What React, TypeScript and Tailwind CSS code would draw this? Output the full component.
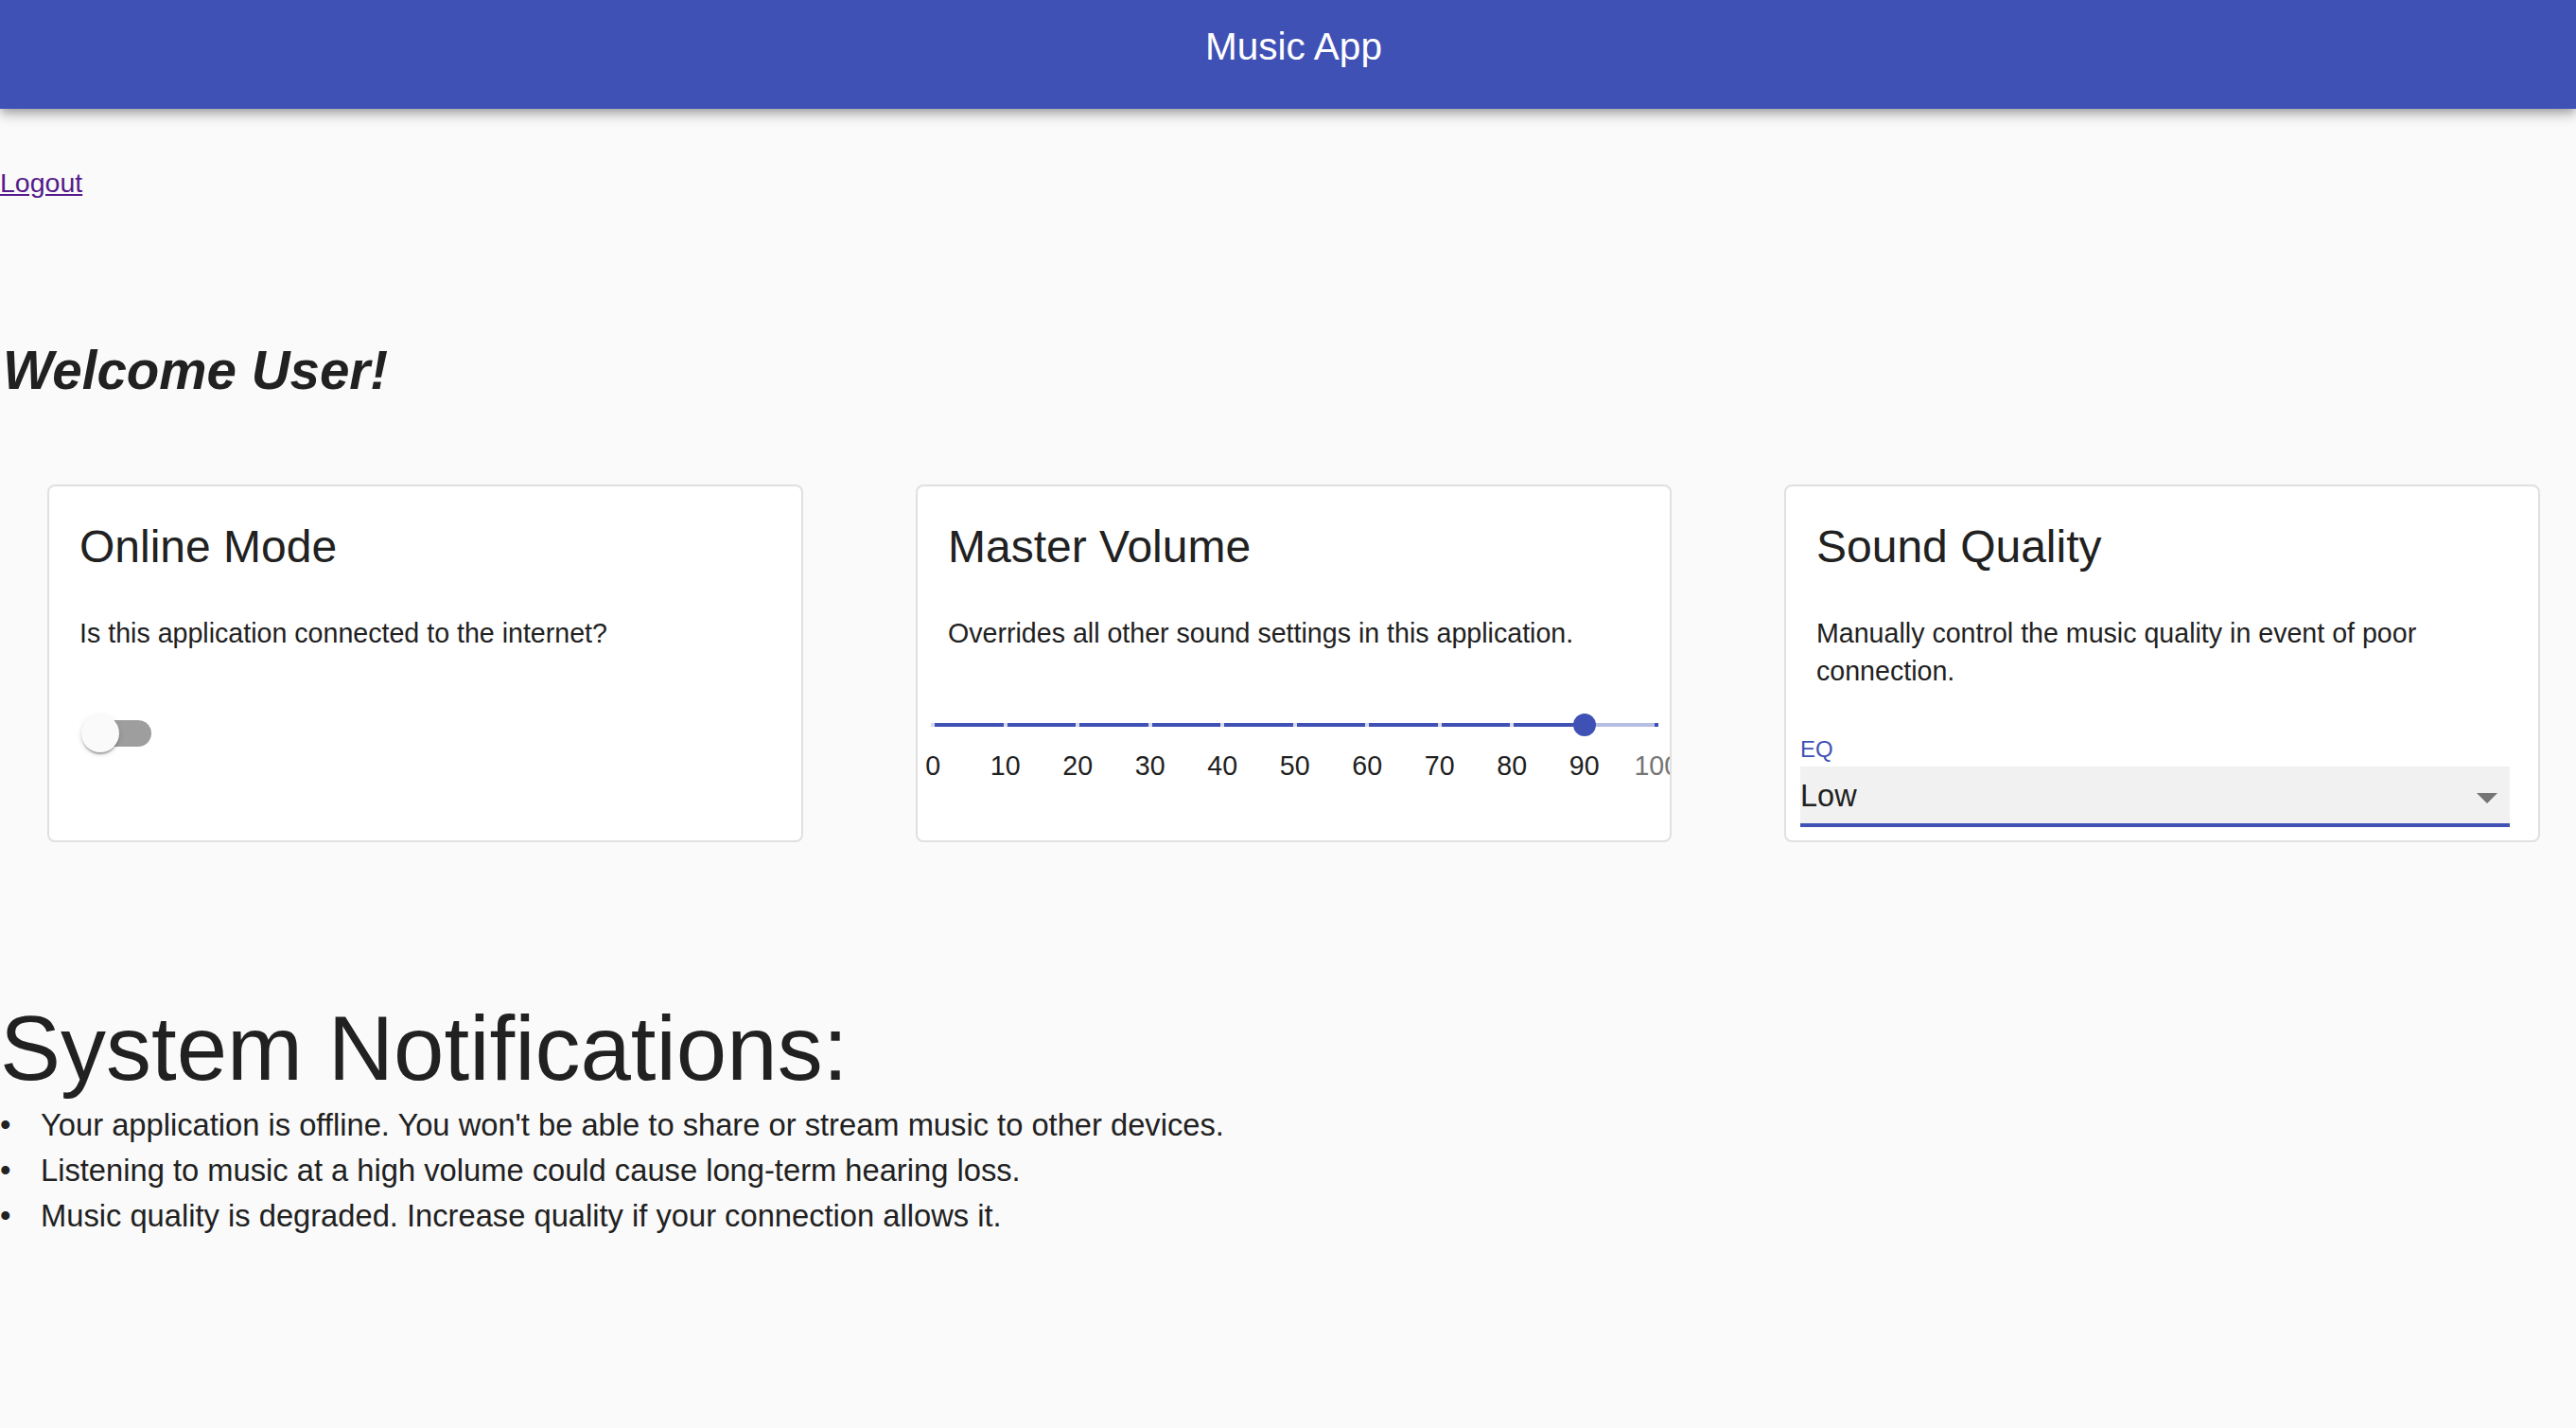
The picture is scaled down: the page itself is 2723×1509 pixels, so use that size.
import React from 'react';

const marks = [0, 10, 20, 30, 40, 50, 60, 70, 80, 90, 100];
const volume = 90;

const notifications = [
  "Your application is offline. You won't be able to share or stream music to other devices.",
  'Listening to music at a high volume could cause long-term hearing loss.',
  'Music quality is degraded. Increase quality if your connection allows it.',
];

function Card({ title, description, children }: { title: string; description: string; children: React.ReactNode }) {
  return (
    <div className="w-[799px] h-[378px] shrink-0 bg-white border-2 border-[#e0e0e0] rounded-[8px] px-[32px] pt-[34px] overflow-hidden flex flex-col">
      <h2 className="text-[48px] leading-[60px] text-[#212121]">{title}</h2>
      <p className="mt-[41px] text-[28.6px] leading-[40px] text-[#212121]">{description}</p>
      {children}
    </div>
  );
}

function VolumeSlider() {
  return (
    <div className="-ml-[16px] w-[765px] shrink-0">
      {/* rail, track, marks, thumb */}
      <div className="relative mt-[65px] h-[24px] flex items-center">
        <div className="w-full h-[4px] bg-[#b6bde3]">
          <div className="h-full bg-[#3f51b5]" style={{ width: `${volume}%` }} />
        </div>
        <div className="absolute inset-x-[-2px] top-[10px] flex justify-between">
          {marks.map((m) => (
            <div key={m} className={`w-[4px] h-[4px] ${m <= volume ? 'bg-[#d9dcf0]' : 'bg-[#3f51b5]'}`} />
          ))}
        </div>
        <div
          className="absolute top-0 w-[24px] h-[24px] rounded-full bg-[#3f51b5] -translate-x-1/2"
          style={{ left: `${volume}%` }}
        />
      </div>
      {/* labels */}
      <div className="mt-[11px] -ml-[38px] flex">
        {marks.map((m) => (
          <span
            key={m}
            className={`w-[76.5px] shrink-0 text-center text-[28.6px] leading-[40px] ${m <= volume ? 'text-[#212121]' : 'text-[#757575]'}`}
          >
            {m}
          </span>
        ))}
      </div>
    </div>
  );
}

export default function App() {
  return (
    <div className="min-h-screen bg-[#fafafa] text-[#212121] font-['Liberation_Sans',Arial,sans-serif]">
      {/* App bar */}
      <header className="h-[115px] bg-[#3f51b5] flex items-center justify-center pb-[17px] pl-[12px] shadow-[0_4px_8px_-2px_rgba(0,0,0,0.2),0_8px_10px_0_rgba(0,0,0,0.14),0_2px_20px_0_rgba(0,0,0,0.12)]">
        <h1 className="text-white text-[40.5px] leading-none">Music App</h1>
      </header>

      <div className="mt-[62px] text-[28.5px] leading-[32px]">
        <a href="#" className="text-[#551a8b] underline">Logout</a>
      </div>

      <h3 className="mt-[151px] ml-[3px] text-[56.5px] leading-[64px] font-bold italic">Welcome User!</h3>

      {/* Settings cards */}
      <div className="mt-[88px] pl-[50px] flex gap-[119px]">
        <Card title="Online Mode" description="Is this application connected to the internet?">
          <div className="relative mt-[66px] h-[40px] w-[80px] flex items-center">
            <div className="ml-[8px] w-[68px] h-[28px] rounded-full bg-[#9e9e9e]" />
            <div className="absolute left-[2px] top-0 w-[40px] h-[40px] rounded-full bg-[#fafafa] shadow-[0_4px_2px_-2px_rgba(0,0,0,0.2),0_2px_2px_0_rgba(0,0,0,0.14),0_2px_6px_0_rgba(0,0,0,0.12)]" />
          </div>
        </Card>

        <Card title="Master Volume" description="Overrides all other sound settings in this application.">
          <VolumeSlider />
        </Card>

        <Card title="Sound Quality" description="Manually control the music quality in event of poor connection.">
          <div className="-ml-[17px] w-[750px] flex flex-col">
            <div className="mt-[51px] text-[24px] leading-[24px] text-[#3f51b5]">EQ</div>
            <div className="mt-[6px] h-[64px] bg-[#f1f1f1] border-b-4 border-[#3f51b5] pt-[11px] pr-[13px] flex items-start justify-between">
              <span className="text-[32.5px] leading-[40px] text-[#212121]">Low</span>
              <svg className="mt-[17px] w-[22px] h-[11px]" viewBox="0 0 10 5">
                <polygon points="0,0 10,0 5,5" fill="#757575" />
              </svg>
            </div>
          </div>
        </Card>
      </div>

      <h2 className="mt-[163px] text-[96px] leading-[110px]">System Notifications:</h2>
      <ul className="mt-[2px] text-[32.7px] leading-[48px]">
        {notifications.map((n) => (
          <li key={n} className="flex">
            <span className="w-[43px] shrink-0">•</span>
            <span>{n}</span>
          </li>
        ))}
      </ul>
    </div>
  );
}
